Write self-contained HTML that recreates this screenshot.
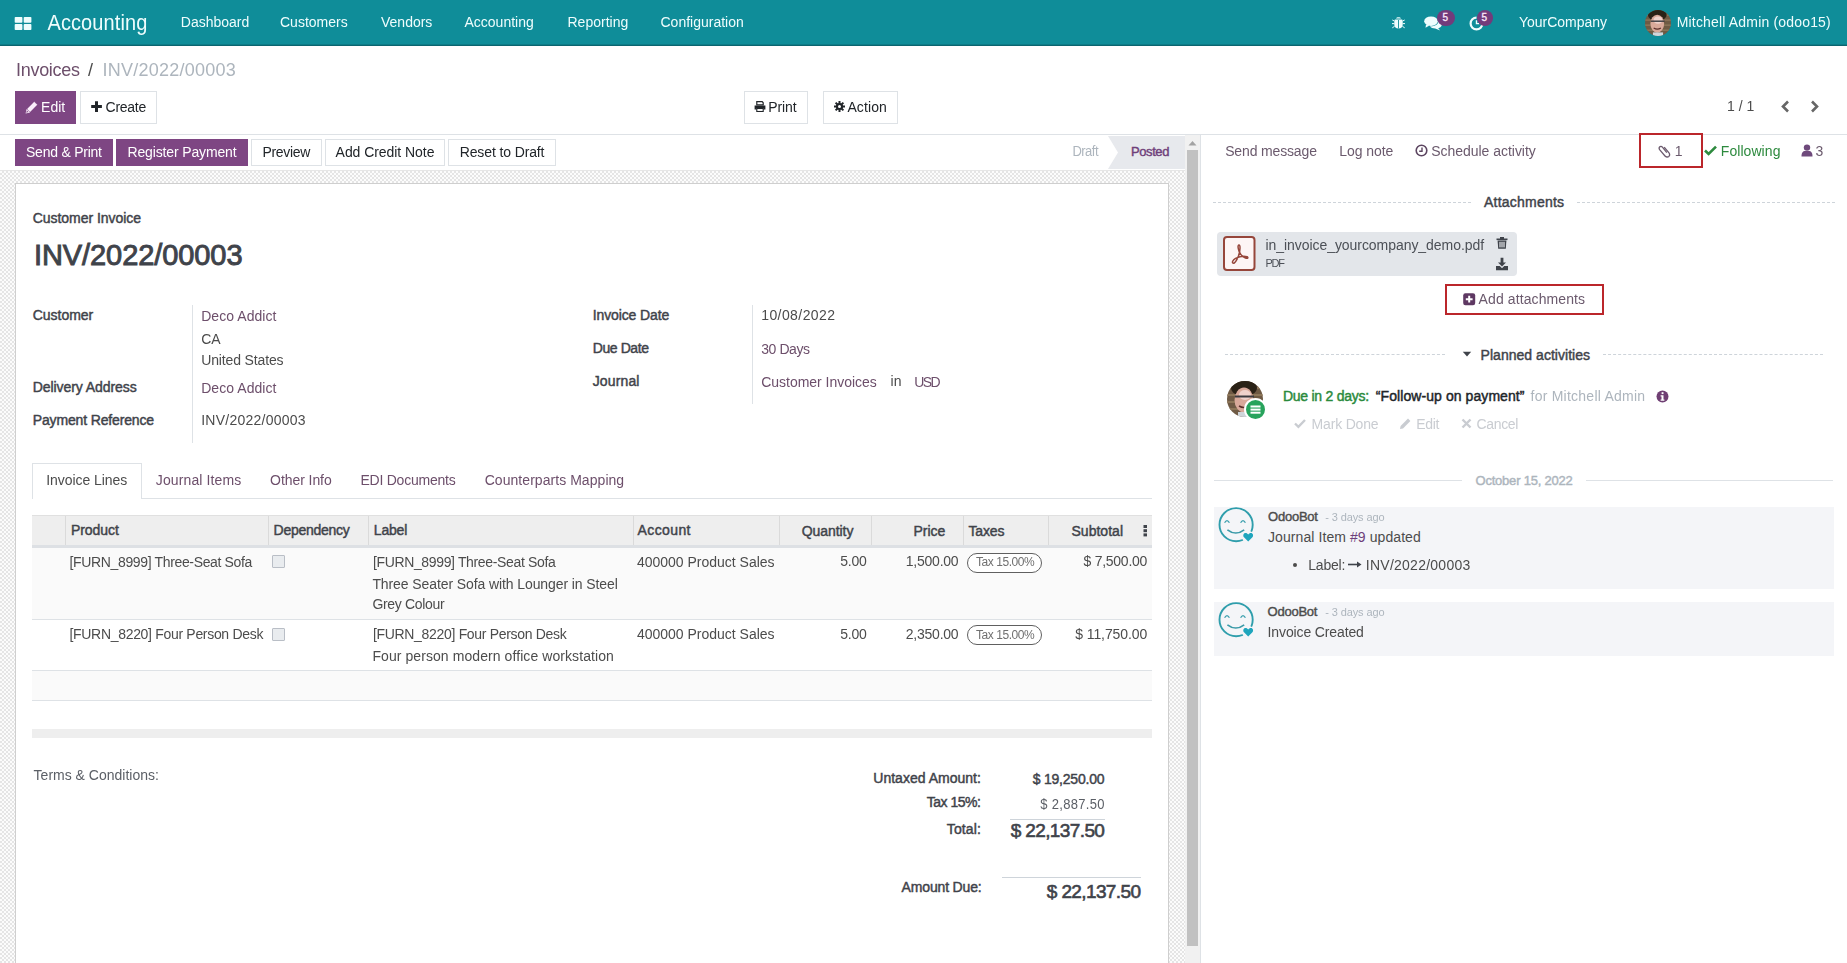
<!DOCTYPE html>
<html><head><meta charset="utf-8">
<style>
*{box-sizing:border-box;margin:0;padding:0}
html,body{width:1847px;height:963px;overflow:hidden;background:#fff;font-family:"Liberation Sans",sans-serif;font-size:14px;color:#4c4c4c}
.t{position:absolute;white-space:nowrap}
.b{position:absolute}
.pat{background:repeating-conic-gradient(#e5e5e5 0 25%,#fcfcfc 0 50%) 0 0/4px 4px}
</style></head>
<body>
<div class="b" style="left:0px;top:0px;width:1847px;height:45px;background:#0f8d99"></div>
<div class="b" style="left:0px;top:44px;width:1847px;height:1px;background:#0d7c87"></div>
<div class="b" style="left:0px;top:45px;width:1847px;height:1px;background:#0b6570"></div>
<svg class="b" style="left:14px;top:16px" width="18" height="15" viewBox="0 0 18 15"><rect x="0.7" y="0.9" width="7.7" height="5.9" rx="0.8" fill="#effdfd"/><rect x="9.7" y="0.9" width="7.7" height="5.9" rx="0.8" fill="#effdfd"/><rect x="0.7" y="8.1" width="7.7" height="5.9" rx="0.8" fill="#effdfd"/><rect x="9.7" y="8.1" width="7.7" height="5.9" rx="0.8" fill="#effdfd"/></svg>
<div class="t" style="top:12.57px;font-size:20px;line-height:20px;color:#effdfd;transform:scaleY(1.07);transform-origin:0 16.93px;letter-spacing:0.092px;left:47.5px;">Accounting</div>
<div class="t" style="top:15.05px;font-size:14px;line-height:14px;color:#effdfd;transform:scaleY(1.07);transform-origin:0 11.85px;left:180.8px;">Dashboard</div>
<div class="t" style="top:15.05px;font-size:14px;line-height:14px;color:#effdfd;transform:scaleY(1.07);transform-origin:0 11.85px;left:280px;">Customers</div>
<div class="t" style="top:15.05px;font-size:14px;line-height:14px;color:#effdfd;transform:scaleY(1.07);transform-origin:0 11.85px;left:381px;">Vendors</div>
<div class="t" style="top:15.05px;font-size:14px;line-height:14px;color:#effdfd;transform:scaleY(1.07);transform-origin:0 11.85px;left:464.5px;">Accounting</div>
<div class="t" style="top:15.05px;font-size:14px;line-height:14px;color:#effdfd;transform:scaleY(1.07);transform-origin:0 11.85px;left:567.5px;">Reporting</div>
<div class="t" style="top:15.05px;font-size:14px;line-height:14px;color:#effdfd;transform:scaleY(1.07);transform-origin:0 11.85px;left:660.5px;">Configuration</div>
<div class="t" style="top:15.05px;font-size:14px;line-height:14px;color:#effdfd;transform:scaleY(1.07);transform-origin:0 11.85px;letter-spacing:-0.017px;left:1519px;">YourCompany</div>
<div class="t" style="top:15.05px;font-size:14px;line-height:14px;color:#effdfd;transform:scaleY(1.07);transform-origin:0 11.85px;letter-spacing:0.176px;left:1676.7px;">Mitchell Admin (odoo15)</div>
<div class="t" style="top:60.56px;font-size:18px;line-height:18px;color:#6d4f6b;transform:scaleY(1.07);transform-origin:0 15.24px;letter-spacing:-0.292px;left:16px;">Invoices</div>
<div class="t" style="top:60.56px;font-size:18px;line-height:18px;color:#4c4c4c;transform:scaleY(1.07);transform-origin:0 15.24px;left:88px;">/</div>
<div class="t" style="top:60.56px;font-size:18px;line-height:18px;color:#adb5bd;transform:scaleY(1.07);transform-origin:0 15.24px;letter-spacing:0.243px;left:102.5px;">INV/2022/00003</div>
<div class="b" style="left:15px;top:91px;width:61px;height:33px;background:#7e4683"></div>
<div class="t" style="top:99.95px;font-size:14px;line-height:14px;color:#fff;transform:scaleY(1.07);transform-origin:0 11.85px;left:41.1px;">Edit</div>
<div class="b" style="left:80px;top:91px;width:77px;height:33px;background:#fff;border:1px solid #dee2e6"></div>
<div class="t" style="top:99.95px;font-size:14px;line-height:14px;color:#212529;transform:scaleY(1.07);transform-origin:0 11.85px;letter-spacing:-0.280px;left:105.6px;">Create</div>
<div class="b" style="left:744px;top:91px;width:64px;height:33px;background:#fff;border:1px solid #dee2e6"></div>
<div class="t" style="top:99.95px;font-size:14px;line-height:14px;color:#212529;transform:scaleY(1.07);transform-origin:0 11.85px;letter-spacing:-0.095px;left:768.3px;">Print</div>
<div class="b" style="left:823px;top:91px;width:75px;height:33px;background:#fff;border:1px solid #dee2e6"></div>
<div class="t" style="top:99.95px;font-size:14px;line-height:14px;color:#212529;transform:scaleY(1.07);transform-origin:0 11.85px;letter-spacing:0.119px;left:847.4px;">Action</div>
<div class="t" style="top:99.25px;font-size:14px;line-height:14px;color:#4c4c4c;transform:scaleY(1.07);transform-origin:0 11.85px;left:1727px;">1 / 1</div>
<div class="b" style="left:0px;top:134px;width:1847px;height:1px;background:#dee2e6"></div>
<div class="b" style="left:0px;top:135px;width:1185px;height:35px;background:#fff"></div>
<div class="b" style="left:0px;top:170px;width:1185px;height:1px;background:#e6e6e6"></div>
<div class="b" style="left:15px;top:139px;width:98px;height:27px;background:#7e4683"></div>
<div class="t" style="top:144.95px;font-size:14px;line-height:14px;color:#fff;transform:scaleY(1.07);transform-origin:0 11.85px;letter-spacing:-0.236px;left:26px;">Send &amp; Print</div>
<div class="b" style="left:116px;top:139px;width:132px;height:27px;background:#7e4683"></div>
<div class="t" style="top:144.95px;font-size:14px;line-height:14px;color:#fff;transform:scaleY(1.07);transform-origin:0 11.85px;letter-spacing:-0.142px;left:127.5px;">Register Payment</div>
<div class="b" style="left:251px;top:139px;width:71px;height:27px;background:#fff;border:1px solid #dee2e6"></div>
<div class="t" style="top:144.95px;font-size:14px;line-height:14px;color:#212529;transform:scaleY(1.07);transform-origin:0 11.85px;letter-spacing:-0.330px;left:262.5px;">Preview</div>
<div class="b" style="left:325px;top:139px;width:120px;height:27px;background:#fff;border:1px solid #dee2e6"></div>
<div class="t" style="top:144.95px;font-size:14px;line-height:14px;color:#212529;transform:scaleY(1.07);transform-origin:0 11.85px;letter-spacing:-0.056px;left:335.6px;">Add Credit Note</div>
<div class="b" style="left:448px;top:139px;width:108px;height:27px;background:#fff;border:1px solid #dee2e6"></div>
<div class="t" style="top:144.95px;font-size:14px;line-height:14px;color:#212529;transform:scaleY(1.07);transform-origin:0 11.85px;letter-spacing:-0.119px;left:459.7px;">Reset to Draft</div>
<svg class="b" style="left:1108px;top:136px" width="77" height="33" viewBox="0 0 77 33"><path d="M0 0 H77 V33 H0 L10 16.5 Z" fill="#e7e9ed"/></svg>
<div class="t" style="top:145.00px;font-size:13px;line-height:13px;color:#adb5bd;transform:scaleY(1.07);transform-origin:0 11.00px;letter-spacing:-0.518px;left:1072.4px;">Draft</div>
<div class="t" style="top:144.80px;font-size:13px;line-height:13px;color:#6f3f7a;-webkit-text-stroke:0.42px #6f3f7a;letter-spacing:-0.417px;left:1131px;">Posted</div>
<div class="b pat" style="left:0;top:171px;width:1185px;height:792px"></div>
<div class="b" style="left:15px;top:183px;width:1154px;height:790px;background:#fff;border:1px solid #cfcfcf"></div>
<div class="b" style="left:1185px;top:135px;width:15px;height:828px;background:#f1f1f1"></div>
<svg class="b" style="left:1187px;top:139px" width="11" height="8" viewBox="0 0 11 8"><path d="M1.5 6.5 L5.5 2 L9.5 6.5 Z" fill="#a3a3a3"/></svg>
<div class="b" style="left:1187px;top:150px;width:11px;height:796px;background:#c1c1c1"></div>
<div class="b" style="left:1200px;top:134px;width:1px;height:829px;background:#dee2e6"></div>
<div class="t" style="top:210.85px;font-size:14px;line-height:14px;color:#3f434a;-webkit-text-stroke:0.45px #3f434a;letter-spacing:-0.033px;left:32.7px;">Customer Invoice</div>
<div class="t" style="top:241.05px;font-size:29px;line-height:29px;color:#3f434a;-webkit-text-stroke:0.93px #3f434a;letter-spacing:-0.084px;left:34px;">INV/2022/00003</div>
<div class="t" style="top:308.15px;font-size:14px;line-height:14px;color:#3f434a;-webkit-text-stroke:0.45px #3f434a;letter-spacing:-0.037px;left:32.8px;">Customer</div>
<div class="t" style="top:379.95px;font-size:14px;line-height:14px;color:#3f434a;-webkit-text-stroke:0.45px #3f434a;letter-spacing:-0.074px;left:32.8px;">Delivery Address</div>
<div class="t" style="top:413.15px;font-size:14px;line-height:14px;color:#3f434a;-webkit-text-stroke:0.45px #3f434a;letter-spacing:-0.149px;left:32.8px;">Payment Reference</div>
<div class="b" style="left:192px;top:305px;width:1px;height:138px;background:#dee2e6"></div>
<div class="t" style="top:309.25px;font-size:14px;line-height:14px;color:#6d4f6b;transform:scaleY(1.07);transform-origin:0 11.85px;letter-spacing:0.050px;left:201.2px;">Deco Addict</div>
<div class="t" style="top:332.05px;font-size:14px;line-height:14px;color:#4c4c4c;transform:scaleY(1.07);transform-origin:0 11.85px;left:201.2px;">CA</div>
<div class="t" style="top:352.75px;font-size:14px;line-height:14px;color:#4c4c4c;transform:scaleY(1.07);transform-origin:0 11.85px;letter-spacing:-0.136px;left:201.2px;">United States</div>
<div class="t" style="top:381.05px;font-size:14px;line-height:14px;color:#6d4f6b;transform:scaleY(1.07);transform-origin:0 11.85px;letter-spacing:0.050px;left:201.2px;">Deco Addict</div>
<div class="t" style="top:413.15px;font-size:14px;line-height:14px;color:#4c4c4c;transform:scaleY(1.07);transform-origin:0 11.85px;letter-spacing:0.250px;left:201.2px;">INV/2022/00003</div>
<div class="t" style="top:307.85px;font-size:14px;line-height:14px;color:#3f434a;-webkit-text-stroke:0.45px #3f434a;letter-spacing:-0.109px;left:592.7px;">Invoice Date</div>
<div class="t" style="top:341.35px;font-size:14px;line-height:14px;color:#3f434a;-webkit-text-stroke:0.45px #3f434a;letter-spacing:-0.404px;left:592.7px;">Due Date</div>
<div class="t" style="top:373.85px;font-size:14px;line-height:14px;color:#3f434a;-webkit-text-stroke:0.45px #3f434a;letter-spacing:0.135px;left:592.7px;">Journal</div>
<div class="b" style="left:752px;top:305px;width:1px;height:99px;background:#dee2e6"></div>
<div class="t" style="top:307.85px;font-size:14px;line-height:14px;color:#4c4c4c;transform:scaleY(1.07);transform-origin:0 11.85px;letter-spacing:0.419px;left:761.2px;">10/08/2022</div>
<div class="t" style="top:341.95px;font-size:14px;line-height:14px;color:#6d4f6b;transform:scaleY(1.07);transform-origin:0 11.85px;letter-spacing:-0.424px;left:761.2px;">30 Days</div>
<div class="t" style="top:375.05px;font-size:14px;line-height:14px;color:#6d4f6b;transform:scaleY(1.07);transform-origin:0 11.85px;letter-spacing:-0.018px;left:761.2px;">Customer Invoices</div>
<div class="t" style="top:373.85px;font-size:14px;line-height:14px;color:#4c4c4c;transform:scaleY(1.07);transform-origin:0 11.85px;left:890.6px;">in</div>
<div class="t" style="top:375.05px;font-size:14px;line-height:14px;color:#6d4f6b;transform:scaleY(1.07);transform-origin:0 11.85px;letter-spacing:-1.581px;left:914.3px;">USD</div>
<div class="b" style="left:32px;top:498px;width:1120px;height:1px;background:#dee2e6"></div>
<div class="b" style="left:32px;top:463px;width:110px;height:36px;background:#fff;border:1px solid #dee2e6;border-bottom:none"></div>
<div class="t" style="top:472.95px;font-size:14px;line-height:14px;color:#4c4c4c;transform:scaleY(1.07);transform-origin:0 11.85px;letter-spacing:-0.066px;left:46.3px;">Invoice Lines</div>
<div class="t" style="top:472.95px;font-size:14px;line-height:14px;color:#6d4f6b;transform:scaleY(1.07);transform-origin:0 11.85px;letter-spacing:0.117px;left:155.8px;">Journal Items</div>
<div class="t" style="top:472.95px;font-size:14px;line-height:14px;color:#6d4f6b;transform:scaleY(1.07);transform-origin:0 11.85px;letter-spacing:-0.070px;left:270.1px;">Other Info</div>
<div class="t" style="top:472.95px;font-size:14px;line-height:14px;color:#6d4f6b;transform:scaleY(1.07);transform-origin:0 11.85px;letter-spacing:-0.226px;left:360.4px;">EDI Documents</div>
<div class="t" style="top:472.95px;font-size:14px;line-height:14px;color:#6d4f6b;transform:scaleY(1.07);transform-origin:0 11.85px;letter-spacing:0.050px;left:484.7px;">Counterparts Mapping</div>
<div class="b" style="left:32px;top:515px;width:1120px;height:31px;background:#eeeeee"></div>
<div class="b" style="left:32px;top:515px;width:1120px;height:1px;background:#e0e0e0"></div>
<div class="b" style="left:32px;top:545px;width:1120px;height:3px;background:#dde0e4"></div>
<div class="b" style="left:65px;top:516px;width:1px;height:29px;background:#dadada"></div>
<div class="b" style="left:268px;top:516px;width:1px;height:29px;background:#dadada"></div>
<div class="b" style="left:368px;top:516px;width:1px;height:29px;background:#dadada"></div>
<div class="b" style="left:633px;top:516px;width:1px;height:29px;background:#dadada"></div>
<div class="b" style="left:779px;top:516px;width:1px;height:29px;background:#dadada"></div>
<div class="b" style="left:871px;top:516px;width:1px;height:29px;background:#dadada"></div>
<div class="b" style="left:963px;top:516px;width:1px;height:29px;background:#dadada"></div>
<div class="b" style="left:1048px;top:516px;width:1px;height:29px;background:#dadada"></div>
<div class="t" style="top:522.85px;font-size:14px;line-height:14px;color:#3f434a;-webkit-text-stroke:0.45px #3f434a;letter-spacing:-0.039px;left:70.9px;">Product</div>
<div class="t" style="top:522.85px;font-size:14px;line-height:14px;color:#3f434a;-webkit-text-stroke:0.45px #3f434a;letter-spacing:-0.286px;left:273.6px;">Dependency</div>
<div class="t" style="top:522.85px;font-size:14px;line-height:14px;color:#3f434a;-webkit-text-stroke:0.45px #3f434a;letter-spacing:-0.184px;left:373.8px;">Label</div>
<div class="t" style="top:522.85px;font-size:14px;line-height:14px;color:#3f434a;-webkit-text-stroke:0.45px #3f434a;letter-spacing:0.404px;left:637.5px;">Account</div>
<div class="t" style="top:523.75px;font-size:14px;line-height:14px;color:#3f434a;-webkit-text-stroke:0.45px #3f434a;letter-spacing:-0.061px;right:993.66px;text-align:right;">Quantity</div>
<div class="t" style="top:523.75px;font-size:14px;line-height:14px;color:#3f434a;-webkit-text-stroke:0.45px #3f434a;letter-spacing:-0.048px;right:901.75px;text-align:right;">Price</div>
<div class="t" style="top:523.75px;font-size:14px;line-height:14px;color:#3f434a;-webkit-text-stroke:0.45px #3f434a;letter-spacing:-0.166px;left:968.5px;">Taxes</div>
<div class="t" style="top:523.75px;font-size:14px;line-height:14px;color:#3f434a;-webkit-text-stroke:0.45px #3f434a;letter-spacing:0.020px;right:723.98px;text-align:right;">Subtotal</div>
<svg class="b" style="left:1143px;top:524px" width="5" height="13" viewBox="0 0 5 13"><rect x="0.5" y="1" width="3.5" height="3" fill="#3f434a"/><rect x="0.5" y="5.2" width="3.5" height="3" fill="#3f434a"/><rect x="0.5" y="9.4" width="3.5" height="3" fill="#3f434a"/></svg>
<div class="b" style="left:32px;top:548px;width:1120px;height:71px;background:#fafafa"></div>
<div class="b" style="left:32px;top:619px;width:1120px;height:1px;background:#dee2e6"></div>
<div class="b" style="left:32px;top:620px;width:1120px;height:50px;background:#fff"></div>
<div class="b" style="left:32px;top:670px;width:1120px;height:1px;background:#dee2e6"></div>
<div class="b" style="left:32px;top:671px;width:1120px;height:29px;background:#fafafa"></div>
<div class="b" style="left:32px;top:700px;width:1120px;height:1px;background:#dee2e6"></div>
<div class="b" style="left:32px;top:729px;width:1120px;height:9px;background:#eeeeee"></div>
<div class="t" style="top:554.55px;font-size:14px;line-height:14px;color:#4c4c4c;transform:scaleY(1.07);transform-origin:0 11.85px;letter-spacing:-0.350px;left:69.5px;">[FURN_8999] Three-Seat Sofa</div>
<div class="b" style="left:272px;top:555px;width:13px;height:13px;background:#e9ecef;border:1px solid #b9bec6;border-radius:1px"></div>
<div class="t" style="top:554.55px;font-size:14px;line-height:14px;color:#4c4c4c;transform:scaleY(1.07);transform-origin:0 11.85px;letter-spacing:-0.350px;left:372.9px;">[FURN_8999] Three-Seat Sofa</div>
<div class="t" style="top:576.55px;font-size:14px;line-height:14px;color:#4c4c4c;transform:scaleY(1.07);transform-origin:0 11.85px;letter-spacing:-0.096px;left:372.4px;">Three Seater Sofa with Lounger in Steel</div>
<div class="t" style="top:597.45px;font-size:14px;line-height:14px;color:#4c4c4c;transform:scaleY(1.07);transform-origin:0 11.85px;letter-spacing:-0.324px;left:372.4px;">Grey Colour</div>
<div class="t" style="top:554.55px;font-size:14px;line-height:14px;color:#4c4c4c;transform:scaleY(1.07);transform-origin:0 11.85px;letter-spacing:-0.012px;left:637px;">400000 Product Sales</div>
<div class="t" style="top:554.35px;font-size:14px;line-height:14px;color:#4c4c4c;transform:scaleY(1.07);transform-origin:0 11.85px;letter-spacing:-0.278px;right:980.58px;text-align:right;">5.00</div>
<div class="t" style="top:554.35px;font-size:14px;line-height:14px;color:#4c4c4c;transform:scaleY(1.07);transform-origin:0 11.85px;letter-spacing:-0.238px;right:888.64px;text-align:right;">1,500.00</div>
<div class="b" style="left:967px;top:553px;width:75px;height:20px;background:#fff;border:1px solid #606060;border-radius:10px"></div>
<div class="t" style="top:556.34px;font-size:12px;line-height:12px;color:#707070;transform:scaleY(1.07);transform-origin:0 10.16px;letter-spacing:-0.443px;left:976px;">Tax 15.00%</div>
<div class="t" style="top:554.35px;font-size:14px;line-height:14px;color:#4c4c4c;transform:scaleY(1.07);transform-origin:0 11.85px;letter-spacing:-0.271px;right:699.97px;text-align:right;">$ 7,500.00</div>
<div class="t" style="top:627.45px;font-size:14px;line-height:14px;color:#4c4c4c;transform:scaleY(1.07);transform-origin:0 11.85px;letter-spacing:-0.312px;left:69.5px;">[FURN_8220] Four Person Desk</div>
<div class="b" style="left:272px;top:628px;width:13px;height:13px;background:#e9ecef;border:1px solid #b9bec6;border-radius:1px"></div>
<div class="t" style="top:627.45px;font-size:14px;line-height:14px;color:#4c4c4c;transform:scaleY(1.07);transform-origin:0 11.85px;letter-spacing:-0.312px;left:372.9px;">[FURN_8220] Four Person Desk</div>
<div class="t" style="top:648.65px;font-size:14px;line-height:14px;color:#4c4c4c;transform:scaleY(1.07);transform-origin:0 11.85px;letter-spacing:0.077px;left:372.4px;">Four person modern office workstation</div>
<div class="t" style="top:627.45px;font-size:14px;line-height:14px;color:#4c4c4c;transform:scaleY(1.07);transform-origin:0 11.85px;letter-spacing:-0.012px;left:637px;">400000 Product Sales</div>
<div class="t" style="top:627.45px;font-size:14px;line-height:14px;color:#4c4c4c;transform:scaleY(1.07);transform-origin:0 11.85px;letter-spacing:-0.278px;right:980.58px;text-align:right;">5.00</div>
<div class="t" style="top:627.45px;font-size:14px;line-height:14px;color:#4c4c4c;transform:scaleY(1.07);transform-origin:0 11.85px;letter-spacing:-0.238px;right:888.64px;text-align:right;">2,350.00</div>
<div class="b" style="left:967px;top:625px;width:75px;height:20px;background:#fff;border:1px solid #606060;border-radius:10px"></div>
<div class="t" style="top:628.64px;font-size:12px;line-height:12px;color:#707070;transform:scaleY(1.07);transform-origin:0 10.16px;letter-spacing:-0.443px;left:976px;">Tax 15.00%</div>
<div class="t" style="top:627.45px;font-size:14px;line-height:14px;color:#4c4c4c;transform:scaleY(1.07);transform-origin:0 11.85px;letter-spacing:-0.089px;right:699.79px;text-align:right;">$ 11,750.00</div>
<div class="t" style="top:767.55px;font-size:14px;line-height:14px;color:#5b5f66;transform:scaleY(1.07);transform-origin:0 11.85px;left:33.6px;">Terms &amp; Conditions:</div>
<div class="t" style="top:770.95px;font-size:14px;line-height:14px;color:#3f434a;-webkit-text-stroke:0.45px #3f434a;letter-spacing:0.016px;right:866.08px;text-align:right;">Untaxed Amount:</div>
<div class="t" style="top:771.75px;font-size:14px;line-height:14px;color:#3f434a;-webkit-text-stroke:0.45px #3f434a;letter-spacing:-0.202px;right:742.60px;text-align:right;">$ 19,250.00</div>
<div class="t" style="top:795.25px;font-size:14px;line-height:14px;color:#3f434a;-webkit-text-stroke:0.45px #3f434a;letter-spacing:-0.483px;right:866.58px;text-align:right;">Tax 15%:</div>
<div class="t" style="top:798.00px;font-size:13px;line-height:13px;color:#5b5f66;transform:scaleY(1.07);transform-origin:0 11.00px;letter-spacing:0.326px;right:742.07px;text-align:right;">$ 2,887.50</div>
<div class="b" style="left:1010px;top:819px;width:95px;height:1px;background:#ced4da"></div>
<div class="t" style="top:821.65px;font-size:14px;line-height:14px;color:#3f434a;-webkit-text-stroke:0.45px #3f434a;letter-spacing:0.129px;right:865.97px;text-align:right;">Total:</div>
<div class="t" style="top:820.92px;font-size:19px;line-height:19px;color:#3f434a;-webkit-text-stroke:0.61px #3f434a;letter-spacing:-0.614px;right:742.71px;text-align:right;">$ 22,137.50</div>
<div class="b" style="left:1002px;top:877px;width:139px;height:1px;background:#ced4da"></div>
<div class="t" style="top:880.05px;font-size:14px;line-height:14px;color:#3f434a;-webkit-text-stroke:0.45px #3f434a;letter-spacing:-0.159px;right:865.46px;text-align:right;">Amount Due:</div>
<div class="t" style="top:882.12px;font-size:19px;line-height:19px;color:#3f434a;-webkit-text-stroke:0.61px #3f434a;letter-spacing:-0.614px;right:706.61px;text-align:right;">$ 22,137.50</div>
<div class="t" style="top:144.15px;font-size:14px;line-height:14px;color:#6b5a6d;transform:scaleY(1.07);transform-origin:0 11.85px;letter-spacing:-0.151px;left:1225.2px;">Send message</div>
<div class="t" style="top:144.15px;font-size:14px;line-height:14px;color:#6b5a6d;transform:scaleY(1.07);transform-origin:0 11.85px;letter-spacing:-0.067px;left:1339.3px;">Log note</div>
<svg class="b" style="left:1414.6px;top:144.4px" width="13" height="13" viewBox="0 0 13 13"><circle cx="6.5" cy="6.5" r="5.3" fill="none" stroke="#5c4560" stroke-width="1.6"/><path d="M7 3.6 V7.2 H4.2" fill="none" stroke="#5c4560" stroke-width="1.4"/></svg>
<div class="t" style="top:144.15px;font-size:14px;line-height:14px;color:#6b5a6d;transform:scaleY(1.07);transform-origin:0 11.85px;letter-spacing:-0.027px;left:1431.2px;">Schedule activity</div>
<div class="b" style="left:1639px;top:133px;width:64px;height:35px;border:2px solid #bb262b"></div>
<svg class="b" style="left:1658px;top:144px;transform:scaleX(-1)" width="13" height="14" viewBox="0 0 13 14"><path d="M4.2 8.6 L8.6 3.2 C9.4 2.2 10.8 2.3 11.4 3 C12 3.7 12 4.8 11.2 5.8 L6 12 C5 13.2 3.2 13.3 2.2 12.4 C1.2 11.4 1.3 9.8 2.2 8.7 L6.8 3.2" fill="none" stroke="#6b5a6d" stroke-width="1.3"/></svg>
<div class="t" style="top:143.75px;font-size:14px;line-height:14px;color:#6b5a6d;transform:scaleY(1.07);transform-origin:0 11.85px;left:1674.7px;">1</div>
<svg class="b" style="left:1704px;top:145px" width="13" height="11" viewBox="0 0 13 11"><path d="M1 5.5 L4.6 9 L12 1.6" fill="none" stroke="#2d8a3e" stroke-width="2.6"/></svg>
<div class="t" style="top:144.15px;font-size:14px;line-height:14px;color:#2d8a3e;transform:scaleY(1.07);transform-origin:0 11.85px;letter-spacing:0.061px;left:1720.8px;">Following</div>
<svg class="b" style="left:1801px;top:144px" width="12" height="13" viewBox="0 0 12 13"><circle cx="6" cy="3.6" r="3.2" fill="#6f4a7c"/><path d="M0.5 12.5 C0.5 8.2 2.4 7 4 7 L8 7 C9.6 7 11.5 8.2 11.5 12.5 Z" fill="#6f4a7c"/></svg>
<div class="t" style="top:144.15px;font-size:14px;line-height:14px;color:#6b5a6d;transform:scaleY(1.07);transform-origin:0 11.85px;left:1815.4px;">3</div>
<div class="b" style="left:1213px;top:202px;width:258px;border-top:1px dashed #ced4da"></div>
<div class="b" style="left:1577px;top:202px;width:258px;border-top:1px dashed #ced4da"></div>
<div class="t" style="top:195.15px;font-size:14px;line-height:14px;color:#3f434a;-webkit-text-stroke:0.45px #3f434a;letter-spacing:0.220px;left:1484px;">Attachments</div>
<div class="b" style="left:1217px;top:232px;width:300px;height:44px;background:#e3e6ea;border-radius:4px"></div>
<svg class="b" style="left:1223px;top:236px" width="33" height="35" viewBox="0 0 33 35"><rect x="1" y="1" width="30.5" height="33" rx="3" fill="#fdf5f5" stroke="#96463b" stroke-width="2"/><path transform="translate(0 1.6)" d="M16 7.5 C14.5 7.5 15 11 16.2 14 C17.5 17 19.5 19.5 22.5 20.5 C25 21.2 25.5 19.8 24 19.2 C21.5 18.4 16.5 19 12.5 20.8 C9.5 22.5 8.8 25 10 25.5 C11.3 26 13.5 23 15 19.5 C16.5 16 17 12.5 17 10.5 C17 8.5 16.7 7.5 16 7.5 Z" fill="none" stroke="#96463b" stroke-width="1.5"/></svg>
<div class="t" style="top:237.95px;font-size:14px;line-height:14px;color:#4c5057;transform:scaleY(1.07);transform-origin:0 11.85px;letter-spacing:-0.051px;left:1265.4px;">in_invoice_yourcompany_demo.pdf</div>
<div class="t" style="top:258.49px;font-size:11px;line-height:11px;color:#4c5057;transform:scaleY(1.07);transform-origin:0 9.31px;letter-spacing:-1.200px;left:1265.4px;">PDF</div>
<svg class="b" style="left:1496px;top:237px" width="12" height="12" viewBox="0 0 12 12"><rect x="0.5" y="1.5" width="11" height="1.6" fill="#3f434a"/><rect x="4" y="0" width="4" height="2" fill="#3f434a"/><path d="M1.6 3.6 H10.4 L9.8 11.8 H2.2 Z" fill="#3f434a"/><rect x="3.4" y="4.8" width="1.2" height="5.6" fill="#e3e6ea"/><rect x="5.4" y="4.8" width="1.2" height="5.6" fill="#e3e6ea"/><rect x="7.4" y="4.8" width="1.2" height="5.6" fill="#e3e6ea"/></svg>
<svg class="b" style="left:1495px;top:257px" width="14" height="14" viewBox="0 0 14 14"><path d="M5.6 0.8 H8.4 V5.5 H11 L7 9.6 L3 5.5 H5.6 Z" fill="#3f434a"/><path d="M1 9 H4.8 L7 11.2 L9.2 9 H13 V13.2 H1 Z" fill="#3f434a"/></svg>
<div class="b" style="left:1445px;top:284px;width:159px;height:31px;border:2px solid #bb262b"></div>
<svg class="b" style="left:1462.6px;top:293px" width="13" height="13" viewBox="0 0 13 13"><rect x="0.2" y="0.2" width="12" height="12" rx="2.2" fill="#5e3862"/><path d="M6.2 2.8 V9.6 M2.8 6.2 H9.6" stroke="#fff" stroke-width="2"/></svg>
<div class="t" style="top:292.15px;font-size:14px;line-height:14px;color:#6b5a6d;transform:scaleY(1.07);transform-origin:0 11.85px;letter-spacing:0.098px;left:1478.6px;">Add attachments</div>
<div class="b" style="left:1225px;top:354px;width:220px;border-top:1px dashed #ced4da"></div>
<div class="b" style="left:1603px;top:354px;width:220px;border-top:1px dashed #ced4da"></div>
<svg class="b" style="left:1462px;top:351px" width="10" height="6" viewBox="0 0 10 6"><path d="M0.8 0.8 H9.2 L5 5.5 Z" fill="#3f434a"/></svg>
<div class="t" style="top:347.55px;font-size:14px;line-height:14px;color:#3f434a;-webkit-text-stroke:0.45px #3f434a;letter-spacing:0.028px;left:1480.6px;">Planned activities</div>
<svg class="b" style="left:1227px;top:381px" width="36" height="36" viewBox="0 0 36 36"><defs><clipPath id="av1"><circle cx="18" cy="18" r="18"/></clipPath><filter id="av1f" x="-10%" y="-10%" width="120%" height="120%"><feGaussianBlur stdDeviation="0.7"/></filter></defs><g clip-path="url(#av1)"><rect width="36" height="36" fill="#6f5a44"/><g filter="url(#av1f)"><rect x="0" y="6" width="36" height="2" fill="#8c7559"/><rect x="0" y="13" width="36" height="2" fill="#8c7559"/><rect x="0" y="20" width="36" height="2" fill="#8c7559"/><rect x="0" y="27" width="36" height="2" fill="#8c7559"/><ellipse cx="17" cy="7" rx="13" ry="8" fill="#2b2019"/><ellipse cx="17" cy="19" rx="9.5" ry="12.5" fill="#d9a99a"/><ellipse cx="18" cy="14" rx="6" ry="5" fill="#efd2cc"/><path d="M8 15.5 H27" stroke="#3a3a40" stroke-width="2"/><path d="M12 25 Q17 28 22 25" stroke="#5a2f2a" stroke-width="1.6" fill="none"/><rect x="11" y="31" width="14" height="6" fill="#cfd5da"/></g></g></svg>
<div class="b" style="left:1244px;top:398px;width:23px;height:23px;border-radius:50%;background:#28a35c;border:2px solid #fff"></div>
<svg class="b" style="left:1250px;top:404px" width="11" height="11" viewBox="0 0 11 11"><rect x="0.5" y="1.5" width="10" height="2" fill="#fff"/><rect x="0.5" y="4.6" width="10" height="2" fill="#fff"/><rect x="0.5" y="7.7" width="10" height="2" fill="#fff"/></svg>
<div class="t" style="top:389.45px;font-size:14px;line-height:14px;color:#2a8a3c;-webkit-text-stroke:0.45px #2a8a3c;letter-spacing:-0.267px;left:1283px;">Due in 2 days:</div>
<div class="t" style="top:389.45px;font-size:14px;line-height:14px;color:#212529;-webkit-text-stroke:0.45px #212529;letter-spacing:0.077px;left:1375.8px;">“Follow-up on payment”</div>
<div class="t" style="top:389.45px;font-size:14px;line-height:14px;color:#adb5bd;transform:scaleY(1.07);transform-origin:0 11.85px;letter-spacing:0.244px;left:1530.5px;">for Mitchell Admin</div>
<svg class="b" style="left:1656px;top:390px" width="13" height="13" viewBox="0 0 13 13"><circle cx="6.5" cy="6.5" r="6" fill="#6f3f73"/><rect x="5.6" y="2.2" width="1.9" height="1.9" fill="#fff"/><path d="M4.6 5.3 H7.5 V9.6 H8.4 V10.8 H4.6 V9.6 H5.5 V6.5 H4.6 Z" fill="#fff"/></svg>
<svg class="b" style="left:1294px;top:418px" width="12" height="11" viewBox="0 0 12 11"><path d="M1 5.5 L4.4 8.8 L11 2" fill="none" stroke="#c9ccd1" stroke-width="2.4"/></svg>
<div class="t" style="top:417.35px;font-size:14px;line-height:14px;color:#c9ccd1;transform:scaleY(1.07);transform-origin:0 11.85px;letter-spacing:-0.192px;left:1311.6px;">Mark Done</div>
<svg class="b" style="left:1399px;top:417px" width="13" height="13" viewBox="0 0 13 13"><path d="M1 12 L1.6 9 L9 1.6 L11.4 4 L4 11.4 Z" fill="#c9ccd1"/></svg>
<div class="t" style="top:417.35px;font-size:14px;line-height:14px;color:#c9ccd1;transform:scaleY(1.07);transform-origin:0 11.85px;letter-spacing:-0.275px;left:1416.2px;">Edit</div>
<svg class="b" style="left:1461px;top:418px" width="11" height="11" viewBox="0 0 11 11"><path d="M1.5 1.5 L9.5 9.5 M9.5 1.5 L1.5 9.5" stroke="#c9ccd1" stroke-width="2.4"/></svg>
<div class="t" style="top:417.35px;font-size:14px;line-height:14px;color:#c9ccd1;transform:scaleY(1.07);transform-origin:0 11.85px;letter-spacing:-0.372px;left:1476.6px;">Cancel</div>
<div class="b" style="left:1214px;top:480px;width:248px;height:1px;background:#dee2e6"></div>
<div class="b" style="left:1586px;top:480px;width:247px;height:1px;background:#dee2e6"></div>
<div class="t" style="top:474.20px;font-size:13px;line-height:13px;color:#adb5bd;-webkit-text-stroke:0.42px #adb5bd;letter-spacing:-0.212px;left:1475.5px;">October 15, 2022</div>
<div class="b" style="left:1214px;top:507px;width:620px;height:82px;background:#f4f5f8"></div>
<div class="b" style="left:1214px;top:602px;width:620px;height:54px;background:#f4f5f8"></div>
<svg class="b" style="left:1217px;top:506px" width="38" height="38" viewBox="0 0 38 38"><circle cx="19.1" cy="18.7" r="16.6" fill="none" stroke="#2f9eac" stroke-width="1.9"/><path d="M7.6 16.8 Q10 12.4 12.4 16.8 M23.6 16.8 Q26 12.4 28.4 16.8" fill="none" stroke="#3a9fad" stroke-width="1.3"/><path d="M10.4 23.8 Q18.8 30.2 27.2 23.8" fill="none" stroke="#3a9aa8" stroke-width="1.6"/><circle cx="31.2" cy="31" r="6.2" fill="#f4f5f8"/><path d="M31.2 35.5 L27 31.2 C25.6 29.7 26.4 26.9 28.5 26.9 C29.7 26.9 30.6 27.6 31.2 28.5 C31.8 27.6 32.7 26.9 33.9 26.9 C36 26.9 36.8 29.7 35.4 31.2 Z" fill="#1ea5bd"/></svg>
<div class="t" style="top:510.40px;font-size:13px;line-height:13px;color:#4c4c4c;-webkit-text-stroke:0.42px #4c4c4c;letter-spacing:-0.255px;left:1268.1px;">OdooBot</div>
<div class="t" style="top:512.29px;font-size:11px;line-height:11px;color:#adb5bd;transform:scaleY(1.07);transform-origin:0 9.31px;letter-spacing:-0.109px;left:1325.2px;">- 3 days ago</div>
<div class="t" style="left:1268px;top:530.05px;font-size:14px;line-height:14px;color:#4c4c4c;letter-spacing:0.08px">Journal Item <span style="color:#6d3f7a">#9</span> updated</div>
<div class="b" style="left:1293px;top:563px;width:4px;height:4px;border-radius:50%;background:#4c4c4c"></div>
<div class="t" style="top:557.85px;font-size:14px;line-height:14px;color:#4c4c4c;transform:scaleY(1.07);transform-origin:0 11.85px;letter-spacing:-0.225px;left:1308.3px;">Label:</div>
<svg class="b" style="left:1348px;top:561px" width="14" height="7" viewBox="0 0 14 7"><path d="M0 3.5 H11" stroke="#3f434a" stroke-width="1.6"/><path d="M9 0.6 L13.5 3.5 L9 6.4 Z" fill="#3f434a"/></svg>
<div class="t" style="top:557.85px;font-size:14px;line-height:14px;color:#4c4c4c;transform:scaleY(1.07);transform-origin:0 11.85px;letter-spacing:0.250px;left:1365.8px;">INV/2022/00003</div>
<svg class="b" style="left:1217px;top:601px" width="38" height="38" viewBox="0 0 38 38"><circle cx="19.1" cy="18.7" r="16.6" fill="none" stroke="#2f9eac" stroke-width="1.9"/><path d="M7.6 16.8 Q10 12.4 12.4 16.8 M23.6 16.8 Q26 12.4 28.4 16.8" fill="none" stroke="#3a9fad" stroke-width="1.3"/><path d="M10.4 23.8 Q18.8 30.2 27.2 23.8" fill="none" stroke="#3a9aa8" stroke-width="1.6"/><circle cx="31.2" cy="31" r="6.2" fill="#f4f5f8"/><path d="M31.2 35.5 L27 31.2 C25.6 29.7 26.4 26.9 28.5 26.9 C29.7 26.9 30.6 27.6 31.2 28.5 C31.8 27.6 32.7 26.9 33.9 26.9 C36 26.9 36.8 29.7 35.4 31.2 Z" fill="#1ea5bd"/></svg>
<div class="t" style="top:604.80px;font-size:13px;line-height:13px;color:#4c4c4c;-webkit-text-stroke:0.42px #4c4c4c;letter-spacing:-0.255px;left:1267.6px;">OdooBot</div>
<div class="t" style="top:606.69px;font-size:11px;line-height:11px;color:#adb5bd;transform:scaleY(1.07);transform-origin:0 9.31px;letter-spacing:-0.109px;left:1325.2px;">- 3 days ago</div>
<div class="t" style="top:624.85px;font-size:14px;line-height:14px;color:#4c4c4c;transform:scaleY(1.07);transform-origin:0 11.85px;letter-spacing:-0.130px;left:1267.6px;">Invoice Created</div>
<svg class="b" style="left:1392px;top:16px" width="13" height="13" viewBox="0 0 13 13"><path d="M4 2.6 C4.3 0.9 8.7 0.9 9 2.6 Z" fill="#effdfd"/><path d="M2.8 3.6 H10.2 C10.6 5 10.8 6.5 10.8 8 C10.8 11 9 12.6 6.5 12.6 C4 12.6 2.2 11 2.2 8 C2.2 6.5 2.4 5 2.8 3.6 Z" fill="#effdfd"/><path d="M6.5 4 V12.5" stroke="#0f8d99" stroke-width="0.9"/><path d="M0.3 4 L2.8 5.2 M12.7 4 L10.2 5.2 M0 7.6 H2.2 M13 7.6 H10.8 M0.3 11.8 L2.6 10.3 M12.7 11.8 L10.4 10.3" stroke="#effdfd" stroke-width="1"/></svg>
<svg class="b" style="left:1424px;top:16px" width="18" height="15" viewBox="0 0 18 15"><ellipse cx="7" cy="5.2" rx="6.8" ry="4.8" fill="#effdfd"/><path d="M2 8.5 L1.5 11.8 L5.5 9.5 Z" fill="#effdfd"/><path d="M14.6 5.2 C16.8 6 18 7.4 17.8 9 C17.6 10.6 16.2 11.8 14.2 12.2 L16.2 14.6 L11.2 12.6 C9 12.6 6.8 11.6 6 10.3 C10.5 10.5 14.4 8.4 14.6 5.2 Z" fill="#effdfd"/></svg>
<svg class="b" style="left:1469px;top:16px" width="15" height="15" viewBox="0 0 15 15"><path d="M7.5 1.6 A5.9 5.9 0 1 0 13.4 7.5" fill="none" stroke="#effdfd" stroke-width="2.2"/><path d="M7.5 4.2 V7.6 H10.2" fill="none" stroke="#effdfd" stroke-width="1.4"/></svg>
<div class="b" style="left:1437px;top:9.5px;width:17.5px;height:16.5px;border-radius:50%;background:#733b7b"></div>
<div class="t" style="top:13.14px;font-size:10px;line-height:10px;color:#fbe9fb;-webkit-text-stroke:0.32px #fbe9fb;left:1442.5px;">5</div>
<div class="b" style="left:1476.5px;top:9.5px;width:16.5px;height:16px;border-radius:50%;background:#733b7b"></div>
<div class="t" style="top:13.14px;font-size:10px;line-height:10px;color:#fbe9fb;-webkit-text-stroke:0.32px #fbe9fb;left:1481.5px;">5</div>
<svg class="b" style="left:1645px;top:10px" width="26" height="26" viewBox="0 0 36 36"><defs><clipPath id="av2"><circle cx="18" cy="18" r="18"/></clipPath><filter id="av2f" x="-10%" y="-10%" width="120%" height="120%"><feGaussianBlur stdDeviation="0.7"/></filter></defs><g clip-path="url(#av2)"><rect width="36" height="36" fill="#6f5a44"/><g filter="url(#av2f)"><rect x="0" y="6" width="36" height="2" fill="#8c7559"/><rect x="0" y="13" width="36" height="2" fill="#8c7559"/><rect x="0" y="20" width="36" height="2" fill="#8c7559"/><rect x="0" y="27" width="36" height="2" fill="#8c7559"/><ellipse cx="17" cy="7" rx="13" ry="8" fill="#2b2019"/><ellipse cx="17" cy="19" rx="9.5" ry="12.5" fill="#d9a99a"/><ellipse cx="18" cy="14" rx="6" ry="5" fill="#efd2cc"/><path d="M8 15.5 H27" stroke="#3a3a40" stroke-width="2"/><path d="M12 25 Q17 28 22 25" stroke="#5a2f2a" stroke-width="1.6" fill="none"/><rect x="11" y="31" width="14" height="6" fill="#cfd5da"/></g></g></svg>
<svg class="b" style="left:25px;top:100px" width="14" height="14" viewBox="0 0 14 14"><path d="M3.6 10.4 L11 3" stroke="#fbeefb" stroke-width="4.2"/><path d="M0.6 13.4 L1.6 8.9 L5.1 12.4 Z" fill="#fbeefb"/><path d="M9.2 1.4 L12.6 4.8" stroke="#7e4683" stroke-width="0.9"/><path d="M1.2 12.8 L2 10.6 L3.4 12 Z" fill="#7e4683"/></svg>
<svg class="b" style="left:90.5px;top:100.8px" width="12" height="12" viewBox="0 0 12 12"><path d="M5.5 0.3 V11 M0.2 5.6 H10.9" stroke="#212529" stroke-width="3"/></svg>
<svg class="b" style="left:754px;top:101px" width="12" height="11" viewBox="0 0 12 11"><path d="M2.8 0.6 H8.2 L9.2 1.8 V3.8 H2.8 Z" fill="none" stroke="#212529" stroke-width="1.2"/><path d="M0.6 4.4 H11.4 V8.6 H9.4 V7 H2.6 V8.6 H0.6 Z" fill="#212529"/><rect x="2.8" y="7.5" width="6.4" height="3" fill="none" stroke="#212529" stroke-width="1.1"/></svg>
<svg class="b" style="left:833.5px;top:100.5px" width="11" height="11" viewBox="0 0 11 11"><g fill="#212529"><circle cx="5.5" cy="5.5" r="3.6"/><rect x="4.5" y="0" width="2" height="11"/><rect x="0" y="4.5" width="11" height="2"/><rect x="4.5" y="0" width="2" height="11" transform="rotate(45 5.5 5.5)"/><rect x="4.5" y="0" width="2" height="11" transform="rotate(-45 5.5 5.5)"/></g><circle cx="5.5" cy="5.5" r="1.5" fill="#fff"/></svg>
<svg class="b" style="left:1780px;top:100px" width="10" height="13" viewBox="0 0 10 13"><path d="M8 1.5 L3 6.5 L8 11.5" fill="none" stroke="#666" stroke-width="2.6"/></svg>
<svg class="b" style="left:1810px;top:100px" width="10" height="13" viewBox="0 0 10 13"><path d="M2 1.5 L7 6.5 L2 11.5" fill="none" stroke="#666" stroke-width="2.6"/></svg>
</body></html>
